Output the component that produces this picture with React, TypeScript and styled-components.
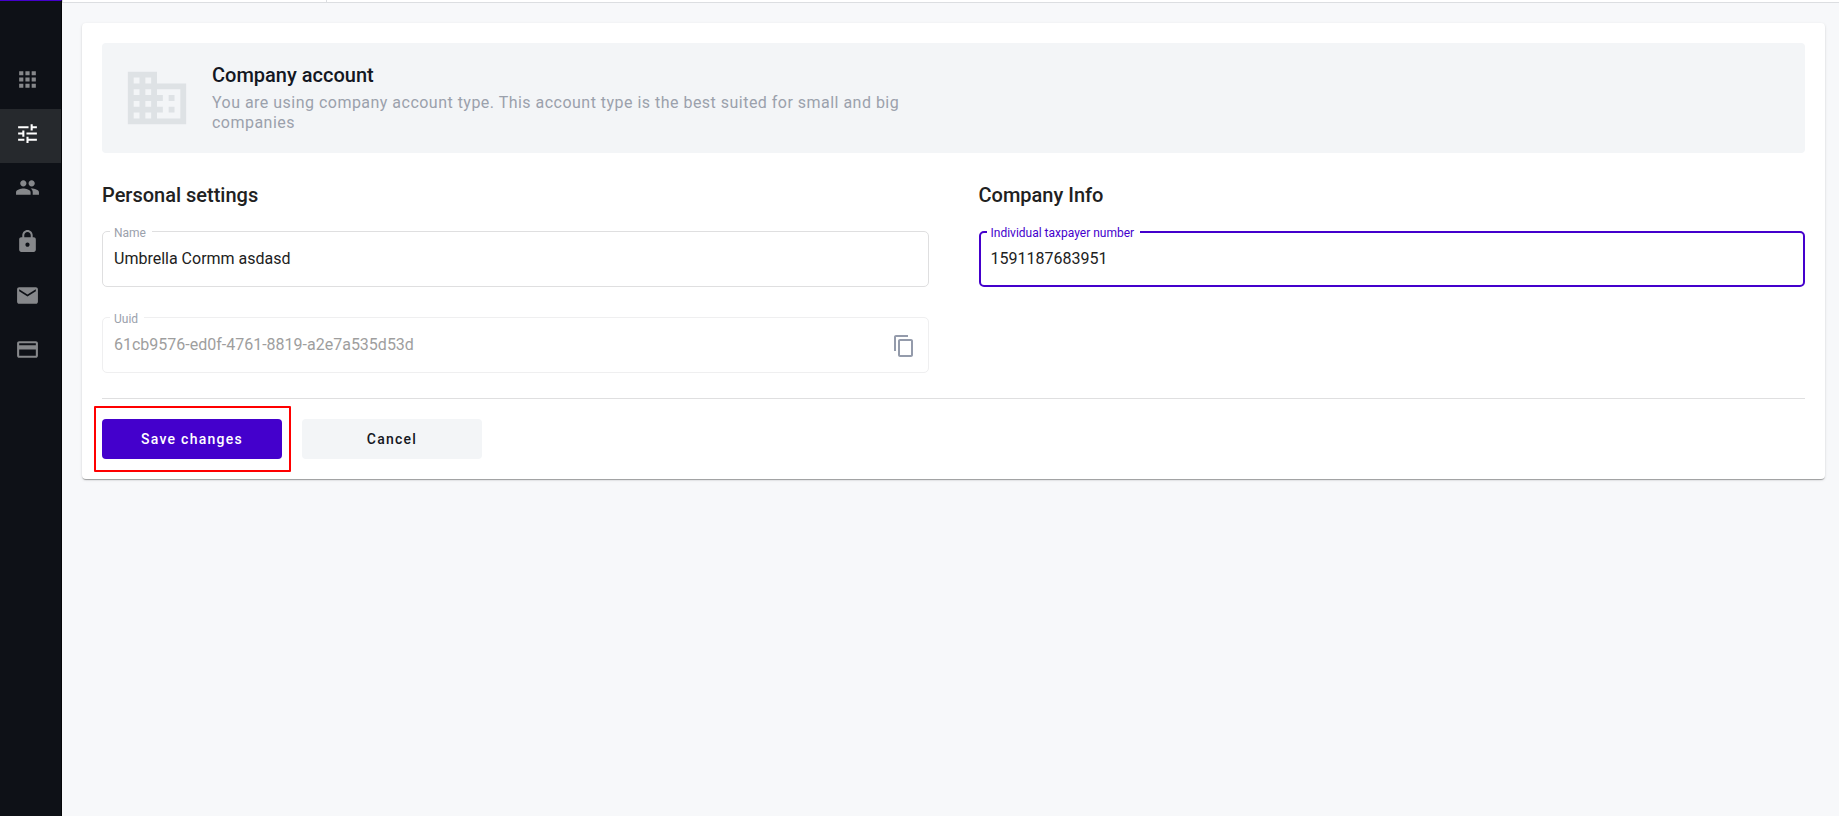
import React, { useState } from 'react';
import styled, { createGlobalStyle } from 'styled-components';
import {
  MdApps,
  MdBusiness,
  MdContentCopy,
  MdLock,
  MdMail,
  MdPayment,
  MdPeople,
  MdTune,
} from 'react-icons/md';

const GlobalStyle = createGlobalStyle`
  *, *::before, *::after { box-sizing: border-box; }
  body {
    margin: 0;
    background: #f7f8fa;
    color: #212121;
    font-family: Roboto, "Liberation Sans", sans-serif;
    font-size: 16px;
  }
`;

const Shell = styled.div`
  display: flex;
  min-height: 100vh;
`;

const Sidebar = styled.nav`
  flex: none;
  width: 62px;
  padding-top: 54px;
  background: #0e1117;
  border-top: 1px solid #4400cc;
  border-right: 1px solid #050608;
`;

const NavLink = styled.a<{ $active?: boolean }>`
  display: block;
  height: 54px;
  padding: 12px 0 0 15px;
  color: ${({ $active }) => ($active ? '#ffffff' : '#86888b')};
  background: ${({ $active }) => ($active ? '#26292d' : 'transparent')};

  svg { display: block; }
`;

const Page = styled.div`
  flex: 1;
  min-width: 0;
`;

const TopBar = styled.header`
  display: flex;
  height: 3px;
  background: #ffffff;
  border-bottom: 1px solid #dcdee1;
  border-left: 1px solid #dcdee1;
`;

const TopBarBrand = styled.div`
  width: 264px;
  border-right: 1px solid #dcdee1;
`;

const Card = styled.main`
  margin: 20px 14px 20px 20px;
  padding: 20px;
  background: #ffffff;
  border-radius: 4px;
  box-shadow:
    0 2px 1px -1px rgba(0, 0, 0, 0.2),
    0 1px 1px 0 rgba(0, 0, 0, 0.14),
    0 1px 3px 0 rgba(0, 0, 0, 0.12);
`;

const Banner = styled.section`
  display: flex;
  gap: 20px;
  padding: 20px;
  background: #f3f5f7;
  border-radius: 4px;

  svg {
    flex: none;
    color: #dee2e5;
  }
`;

const Title = styled.h2<{ $dark?: boolean }>`
  margin: 0;
  font-size: 20px;
  font-weight: 500;
  line-height: 24px;
  color: ${({ $dark }) => ($dark ? '#131722' : '#212121')};
`;

const BannerText = styled.p`
  max-width: 700px;
  margin: 6px 0 0;
  line-height: 20px;
  letter-spacing: 0.03em;
  color: #9ba1ac;
`;

const Columns = styled.div`
  display: grid;
  grid-template-columns: 1fr 1fr;
  gap: 50px;
  margin-top: 30px;
`;

const Fields = styled.div`
  display: grid;
  gap: 30px;
  margin-top: 24px;
`;

const FieldBox = styled.div`
  position: relative;
  display: flex;
  height: 56px;
`;

const Label = styled.label<{ $focused?: boolean }>`
  position: absolute;
  top: -5px;
  left: 8px;
  padding: 0 6px 0 4px;
  background: #ffffff;
  font-size: 12px;
  line-height: 14px;
  color: ${({ $focused }) => ($focused ? '#4400cc' : '#9ba1ac')};
`;

const Input = styled.input<{ $focused?: boolean }>`
  flex: 1;
  min-width: 0;
  padding: ${({ $focused }) => ($focused ? '0 10px 2px' : '0 11px 2px')};
  border: ${({ $focused }) => ($focused ? '2px solid #4400cc' : '1px solid #dfdfe0')};
  border-radius: 5px;
  outline: none;
  background: #ffffff;
  font: inherit;
  color: #212121;

  &:disabled {
    border-color: #efeff0;
    color: #9e9e9e;
  }
`;

const CopyButton = styled.button`
  position: absolute;
  top: 17px;
  right: 13px;
  padding: 0;
  border: 0;
  background: transparent;
  color: #949bab;
  cursor: pointer;

  svg { display: block; }
`;

const Actions = styled.div`
  display: flex;
  gap: 20px;
  margin-top: 25px;
  padding-top: 20px;
  border-top: 1px solid #dfdfe0;
`;

const Button = styled.button<{ $primary?: boolean }>`
  width: 180px;
  height: 40px;
  padding: 0;
  border: 0;
  border-radius: 4px;
  background: ${({ $primary }) => ($primary ? '#4400cc' : '#f3f5f7')};
  color: ${({ $primary }) => ($primary ? '#ffffff' : '#131722')};
  font: 500 14px Roboto, "Liberation Sans", sans-serif;
  letter-spacing: 0.09em;
  cursor: pointer;
`;

const Highlight = styled.div`
  position: relative;
  display: flex;

  &::after {
    content: '';
    position: absolute;
    inset: -13px -9px -13px -8px;
    border: 2px solid #ff0000;
    border-radius: 1px;
    pointer-events: none;
  }
`;

const navItems = [
  { label: 'Apps', Icon: MdApps },
  { label: 'Settings', Icon: MdTune, active: true },
  { label: 'Users', Icon: MdPeople },
  { label: 'Security', Icon: MdLock },
  { label: 'Mail', Icon: MdMail },
  { label: 'Billing', Icon: MdPayment },
];

const uuid = '61cb9576-ed0f-4761-8819-a2e7a535d53d';

export default function App() {
  const [name, setName] = useState('Umbrella Cormm asdasd');
  const [taxNumber, setTaxNumber] = useState('1591187683951');

  return (
    <>
      <GlobalStyle />
      <Shell>
        <Sidebar>
          {navItems.map(({ label, Icon, active }) => (
            <NavLink key={label} href="#" aria-label={label} $active={active}>
              <Icon size={25} />
            </NavLink>
          ))}
        </Sidebar>
        <Page>
          <TopBar>
            <TopBarBrand />
          </TopBar>
          <Card>
            <Banner>
              <MdBusiness size={70} />
              <div>
                <Title $dark>Company account</Title>
                <BannerText>
                  You are using company account type. This account type is the best suited for
                  small and big companies
                </BannerText>
              </div>
            </Banner>
            <form onSubmit={(e) => e.preventDefault()}>
              <Columns>
                <section>
                  <Title>Personal settings</Title>
                  <Fields>
                    <FieldBox>
                      <Input id="name" value={name} onChange={(e) => setName(e.target.value)} />
                      <Label htmlFor="name">Name</Label>
                    </FieldBox>
                    <FieldBox>
                      <Input id="uuid" value={uuid} disabled readOnly />
                      <Label htmlFor="uuid">Uuid</Label>
                      <CopyButton
                        type="button"
                        aria-label="Copy uuid"
                        onClick={() => navigator.clipboard?.writeText(uuid)}
                      >
                        <MdContentCopy size={24} />
                      </CopyButton>
                    </FieldBox>
                  </Fields>
                </section>
                <section>
                  <Title>Company Info</Title>
                  <Fields>
                    <FieldBox>
                      <Input
                        id="tax"
                        $focused
                        value={taxNumber}
                        onChange={(e) => setTaxNumber(e.target.value)}
                      />
                      <Label htmlFor="tax" $focused>
                        Individual taxpayer number
                      </Label>
                    </FieldBox>
                  </Fields>
                </section>
              </Columns>
              <Actions>
                <Highlight>
                  <Button type="submit" $primary>
                    Save changes
                  </Button>
                </Highlight>
                <Button type="button">Cancel</Button>
              </Actions>
            </form>
          </Card>
        </Page>
      </Shell>
    </>
  );
}
